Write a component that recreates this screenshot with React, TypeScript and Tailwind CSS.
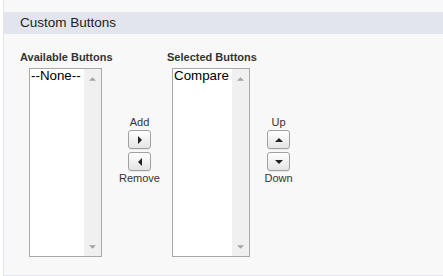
import React from "react";

function Arrow({ dir, className }: { dir: "up" | "down" | "left" | "right"; className?: string }) {
    const pts: Record<string, string> = {
        up: "0,4 4,0 8,4",
        down: "0,0 8,0 4,4",
        right: "0,0 4,4 0,8",
        left: "4,0 0,4 4,8",
    };
    const vertical = dir === "up" || dir === "down";
    return (
        <svg
            width={vertical ? 8 : 4}
            height={vertical ? 4 : 8}
            viewBox={vertical ? "0 0 8 4" : "0 0 4 8"}
            className={className}
        >
            <polygon points={pts[dir]} fill="currentColor" />
        </svg>
    );
}

function ListBox({ items, width }: { items: string[]; width: string }) {
    return (
        <div className={`${width} h-[189px] border border-[#a9a9a9] bg-white flex`}>
            <div className="flex-1 pl-[1px] text-[13.33px] leading-[14px] text-black whitespace-nowrap overflow-hidden">
                {items.map((item) => (
                    <div key={item}>{item}</div>
                ))}
            </div>
            <div className="w-[17px] h-full bg-[#f0f0f0] flex flex-col items-center justify-between pt-[8px] pb-[7px] text-[#a3a3a3]">
                <Arrow dir="up" className="w-[7px] h-[4px]" />
                <Arrow dir="down" className="w-[7px] h-[4px]" />
            </div>
        </div>
    );
}

function MoveButton({ dir }: { dir: "up" | "down" | "left" | "right" }) {
    return (
        <button
            type="button"
            className="w-[23px] h-[19px] rounded-[3px] border border-[#a0a0a0] bg-gradient-to-b from-white to-[#e4e4e4] flex items-center justify-center text-[#222] shadow-[0_1px_0_rgba(0,0,0,0.06)]"
        >
            <Arrow dir={dir} />
        </button>
    );
}

function ButtonGroup({ top, bottom, first, second }: { top: string; bottom: string; first: "right" | "up"; second: "left" | "down" }) {
    return (
        <div className="flex flex-col items-center pt-[65px] text-[11px] leading-[13px] text-[#333]">
            <span>{top}</span>
            <div className="mt-[1px] flex flex-col gap-[3px]">
                <MoveButton dir={first} />
                <MoveButton dir={second} />
            </div>
            <span className="mt-[1px]">{bottom}</span>
        </div>
    );
}

export default function App() {
    return (
        <div
            className="w-[443px] h-[276px] bg-white pl-[3px]"
            style={{ fontFamily: '"Liberation Sans", Arial, sans-serif' }}
        >
            <div className="h-full border-l border-b border-[#e3e6ee] bg-[#f8f8f8] pt-[12px]">
                <div className="h-[22px] bg-[#e3e5ed] pl-[16px] flex items-center text-[13.5px] text-[#222]">
                    Custom Buttons
                </div>
                <div className="flex pl-[16px] pt-[17px]">
                    <div className="w-[92px] flex flex-col">
                        <p className="text-[11px] leading-[13px] font-bold text-[#333] whitespace-nowrap">Available Buttons</p>
                        <div className="mt-[4px] ml-[9px]">
                            <ListBox items={["--None--"]} width="w-[73px]" />
                        </div>
                    </div>
                    <div className="w-[55px]">
                        <ButtonGroup top="Add" bottom="Remove" first="right" second="left" />
                    </div>
                    <div className="w-[90px] flex flex-col">
                        <p className="text-[11px] leading-[13px] font-bold text-[#333] whitespace-nowrap">Selected Buttons</p>
                        <div className="mt-[4px] ml-[5px]">
                            <ListBox items={["Compare"]} width="w-[78px]" />
                        </div>
                    </div>
                    <div className="w-[43px]">
                        <ButtonGroup top="Up" bottom="Down" first="up" second="down" />
                    </div>
                </div>
            </div>
        </div>
    );
}
